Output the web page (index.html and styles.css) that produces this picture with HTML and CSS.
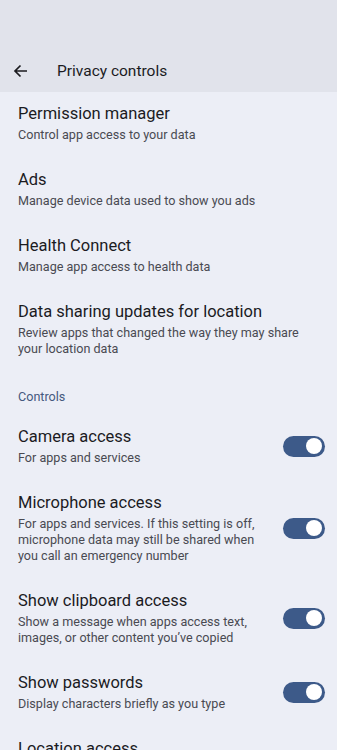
FILE: index.html
```html
<!DOCTYPE html>
<html>
<head>
  <meta charset="utf-8">
  <meta name="viewport" content="width=device-width, initial-scale=1.0">
  <title>Privacy controls</title>
  <link rel="stylesheet" href="styles.css">
</head>
<body>
  <div class="top-bar">
    <div class="title-row">
      <svg class="back-icon" width="24" height="24" viewBox="0 0 24 24">
        <path d="M18 12H6.5M11.5 6.5L6 12l5.5 5.5" fill="none" stroke="#1b1b1f" stroke-width="1.7"/>
      </svg>
      <span class="page-title">Privacy controls</span>
    </div>
  </div>

  <div class="settings-list">
    <div class="item first">
      <div class="item-text">
        <div class="item-title">Permission manager</div>
        <div class="item-sub">Control app access to your data</div>
      </div>
    </div>
    <div class="item">
      <div class="item-text">
        <div class="item-title">Ads</div>
        <div class="item-sub">Manage device data used to show you ads</div>
      </div>
    </div>
    <div class="item">
      <div class="item-text">
        <div class="item-title">Health Connect</div>
        <div class="item-sub">Manage app access to health data</div>
      </div>
    </div>
    <div class="item">
      <div class="item-text">
        <div class="item-title">Data sharing updates for location</div>
        <div class="item-sub">Review apps that changed the way they may share your location data</div>
      </div>
    </div>

    <div class="section-header">Controls</div>

    <div class="item">
      <div class="item-text">
        <div class="item-title">Camera access</div>
        <div class="item-sub">For apps and services</div>
      </div>
      <div class="switch"><div class="thumb"></div></div>
    </div>
    <div class="item">
      <div class="item-text">
        <div class="item-title">Microphone access</div>
        <div class="item-sub">For apps and services. If this setting is off, microphone data may still be shared when you call an emergency number</div>
      </div>
      <div class="switch"><div class="thumb"></div></div>
    </div>
    <div class="item">
      <div class="item-text">
        <div class="item-title">Show clipboard access</div>
        <div class="item-sub">Show a message when apps access text, images, or other content you’ve copied</div>
      </div>
      <div class="switch"><div class="thumb"></div></div>
    </div>
    <div class="item">
      <div class="item-text">
        <div class="item-title">Show passwords</div>
        <div class="item-sub">Display characters briefly as you type</div>
      </div>
      <div class="switch"><div class="thumb"></div></div>
    </div>
    <div class="item">
      <div class="item-text">
        <div class="item-title">Location access</div>
      </div>
    </div>
  </div>
</body>
</html>
```

FILE: styles.css
```css
*, *::before, *::after {
  box-sizing: border-box;
  margin: 0;
  padding: 0;
}

html, body {
  height: 100%;
  overflow: hidden;
}

body {
  font-family: Roboto, "Noto Sans", sans-serif;
  background-color: #eceef6;
  color: #1b1b1f;
}

.top-bar {
  background-color: #e1e3eb;
  height: 92px;
  display: flex;
  align-items: flex-end;
}

.title-row {
  display: flex;
  align-items: center;
  height: 42px;
  padding-left: 9px;
  width: 100%;
}

.back-icon {
  width: 24px;
  height: 24px;
}

.page-title {
  margin-left: 24px;
  font-size: 15.5px;
  color: #1b1b1f;
}

.settings-list {
  display: flex;
  flex-direction: column;
}

.item {
  display: flex;
  align-items: center;
  gap: 16px;
  padding: 13px 12px 13px 18px;
}

.item.first {
  padding-top: 11px;
}

.item-text {
  flex: 1;
  min-width: 0;
}

.item-title {
  font-size: 16.5px;
  line-height: 22px;
  color: #1b1b1f;
}

.item-sub {
  margin-top: 2px;
  font-size: 12.6px;
  line-height: 16px;
  color: #494a52;
}

.section-header {
  padding: 19px 18px 8px;
  font-size: 12.6px;
  line-height: 16px;
  color: #45597e;
}

.switch {
  flex-shrink: 0;
  width: 42px;
  height: 21px;
  border-radius: 11px;
  background-color: #3d5a89;
  display: flex;
  align-items: center;
  justify-content: flex-end;
  padding-right: 3px;
}

.thumb {
  width: 16px;
  height: 16px;
  border-radius: 50%;
  background-color: #ffffff;
}
```
